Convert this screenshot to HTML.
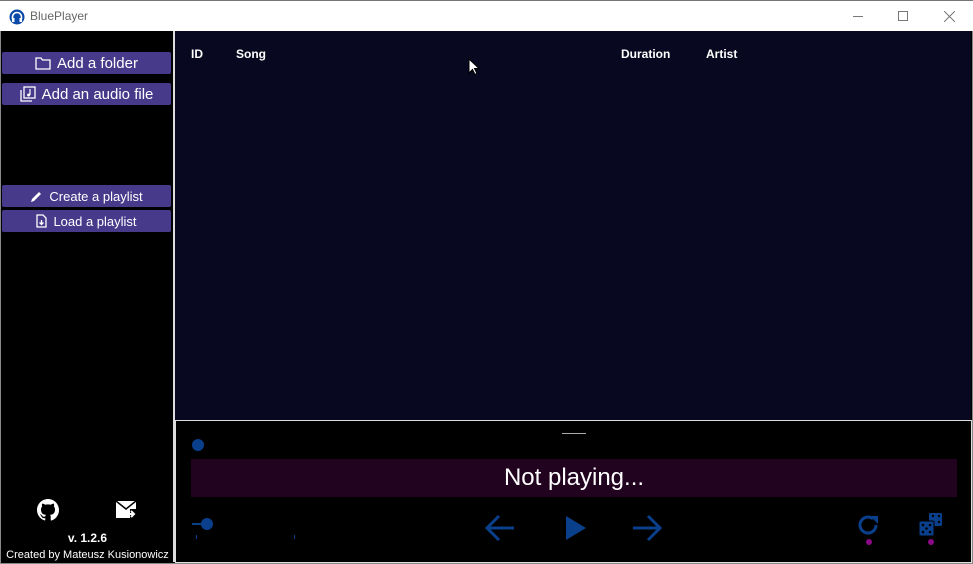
<!DOCTYPE html>
<html><head><meta charset="utf-8"><style>
*{margin:0;padding:0;box-sizing:border-box}
body{width:973px;height:564px;overflow:hidden;background:#fff;font-family:"Liberation Sans",sans-serif;position:relative}
.abs{position:absolute}
.title{left:0;top:0;width:973px;height:31px;background:#fff;border-top:1px solid #777}
.side{left:2px;top:31px;width:171px;height:531px;background:#000}
.main{left:175px;top:31px;width:796px;height:389px;background:#080820}
.btn{position:absolute;left:2px;width:169px;background:#483a8a;color:#fff;display:flex;align-items:center;justify-content:center;gap:6px;border-radius:2px}
.hd{color:#fff;font-weight:bold;font-size:12px;top:48px}
.bot{left:175px;top:420px;width:797px;height:143px;background:#000;border:1px solid #ddd}
</style></head><body>
<div class="abs" style="left:0;top:0;width:973px;height:564px;border:1px solid #888;background:#000"></div>
<div class="abs title">
<svg class="abs" style="left:9px;top:8px" width="16" height="16" viewBox="0 0 16 16"><circle cx="8" cy="8" r="7.5" fill="#0b4aa8"/><path d="M3.5 10V8a4.5 4.5 0 0 1 9 0v2" stroke="#fff" stroke-width="1.6" fill="none"/><rect x="3" y="9" width="2.5" height="4" fill="#fff"/><rect x="10.5" y="9" width="2.5" height="4" fill="#fff"/></svg>
<div class="abs" style="left:30px;top:8px;font-size:12px;color:#666">BluePlayer</div>
<div class="abs" style="left:853px;top:15px;width:10px;height:1px;background:#777"></div>
<div class="abs" style="left:898px;top:10px;width:10px;height:10px;border:1px solid #777"></div>
<svg class="abs" style="left:944px;top:10px" width="11" height="11"><path d="M0 0L11 11M11 0L0 11" stroke="#777" stroke-width="1"/></svg>
</div>
<div class="abs side"></div>
<div class="abs" style="left:173px;top:31px;width:2px;height:531px;background:#ddd"></div>
<div class="btn" style="top:52px;height:22px;font-size:15px"><svg width="16" height="13" viewBox="0 0 16 13"><path d="M1 1h5l1.5 2H15v9H1z" fill="none" stroke="#fff" stroke-width="1.3"/></svg>Add a folder</div>
<div class="btn" style="top:83px;height:22px;font-size:15px"><svg width="16" height="16" viewBox="0 0 16 16"><rect x="4" y="1" width="11" height="11" fill="none" stroke="#fff" stroke-width="1.3"/><path d="M1 4v11h11" fill="none" stroke="#fff" stroke-width="1.3"/><path d="M10 3v6" stroke="#fff" stroke-width="1.2"/><circle cx="8.6" cy="9" r="1.5" fill="#fff"/></svg>Add an audio file</div>
<div class="btn" style="top:185px;height:22px;font-size:13px"><svg width="13" height="13" viewBox="0 0 13 13"><path d="M1 12l1-3 7-7 2 2-7 7z" fill="#fff"/></svg>Create a playlist</div>
<div class="btn" style="top:210px;height:22px;font-size:13px"><svg width="11" height="14" viewBox="0 0 11 14"><path d="M1 1h6l3 3v9H1z" fill="none" stroke="#fff" stroke-width="1.3"/><path d="M5.5 6v4M3.5 8.5l2 2 2-2" stroke="#fff" stroke-width="1.3" fill="none"/></svg>Load a playlist</div>
<svg class="abs" style="left:37px;top:499px" width="22" height="22" viewBox="0 0 16 16"><path fill="#fff" d="M8 0C3.58 0 0 3.58 0 8c0 3.54 2.29 6.53 5.47 7.59.4.07.55-.17.55-.38v-1.33c-2.23.48-2.7-1.07-2.7-1.07-.36-.92-.89-1.17-.89-1.17-.73-.5.05-.49.05-.49.8.06 1.23.83 1.23.83.71 1.22 1.87.87 2.33.66.07-.52.28-.87.5-1.07-1.78-.2-3.64-.89-3.64-3.95 0-.87.31-1.59.82-2.15-.08-.2-.36-1.02.08-2.12 0 0 .67-.21 2.2.82a7.6 7.6 0 0 1 4 0c1.53-1.04 2.2-.82 2.2-.82.44 1.1.16 1.92.08 2.12.51.56.82 1.27.82 2.15 0 3.07-1.87 3.75-3.65 3.95.29.25.54.73.54 1.48v2.2c0 .21.15.46.55.38A8 8 0 0 0 16 8c0-4.42-3.58-8-8-8z"/></svg>
<svg class="abs" style="left:116px;top:500px" width="22" height="20" viewBox="0 0 22 20"><path d="M0 1h20v8h-6v9H0z" fill="#fff"/><path d="M0 1l10 8 10-8" stroke="#000" stroke-width="1.5" fill="none"/><path d="M12 14h6M15 11l3 3-3 3" stroke="#fff" stroke-width="2" fill="none"/></svg>
<div class="abs" style="left:2px;width:171px;top:531px;text-align:center;color:#fff;font-weight:bold;font-size:12px">v. 1.2.6</div>
<div class="abs" style="left:2px;width:171px;top:549px;text-align:center;color:#fff;font-size:11px">Created by Mateusz Kusionowicz</div>
<div class="abs main">
<div class="abs hd" style="left:16px;top:16px">ID</div>
<div class="abs hd" style="left:61px;top:16px">Song</div>
<div class="abs hd" style="left:446px;top:16px">Duration</div>
<div class="abs hd" style="left:531px;top:16px">Artist</div>
<svg class="abs" style="left:293px;top:27px" width="12" height="18" viewBox="0 0 12 18"><path d="M1 1v14l3.5-3.5 2.5 5 2-1-2.5-5H11z" fill="#fff" stroke="#000" stroke-width="1"/></svg>
</div>
<div class="abs bot">
<div class="abs" style="left:386px;top:12px;width:24px;height:1px;background:#aaa"></div>
<div class="abs" style="left:16px;top:18px;width:12px;height:12px;border-radius:50%;background:#0a3f8c"></div>
<div class="abs" style="left:15px;top:38px;width:766px;height:38px;background:#210320;color:#fff;font-size:24px;text-align:center;line-height:38px">Not playing...</div>
<div class="abs" style="left:16px;top:102px;width:12px;height:2px;background:#0a3f8c"></div>
<div class="abs" style="left:25px;top:97px;width:12px;height:12px;border-radius:50%;background:#0a3f8c"></div>
<div class="abs" style="left:20px;top:114px;width:1px;height:4px;background:#0a3f8c"></div>
<div class="abs" style="left:118px;top:114px;width:1px;height:4px;background:#0a3f8c"></div>
<svg class="abs" style="left:309px;top:93px" width="30" height="28" viewBox="0 0 30 28"><path d="M29 14H3M14 2L2 14l12 12" stroke="#0a3f8c" stroke-width="3" fill="none"/></svg>
<svg class="abs" style="left:390px;top:95px" width="20" height="24"><path d="M0 0l20 12L0 24z" fill="#0a3f8c"/></svg>
<svg class="abs" style="left:456px;top:93px" width="30" height="28" viewBox="0 0 30 28"><path d="M1 14h26M16 2l12 12-12 12" stroke="#0a3f8c" stroke-width="3" fill="none"/></svg>
<svg class="abs" style="left:682px;top:93px" width="22" height="22" viewBox="0 0 22 22"><path d="M18 11a8 8 0 1 1-3-6.2" stroke="#0a3f8c" stroke-width="3" fill="none"/><path d="M12 2h8v8z" fill="#0a3f8c"/></svg>
<div class="abs" style="left:690px;top:118px;width:6px;height:6px;border-radius:50%;background:#8a0a8a"></div>
<svg class="abs" style="left:743px;top:92px" width="24" height="24" viewBox="0 0 24 24"><rect x="10" y="0" width="13" height="13" rx="1.5" fill="#0a3f8c"/><rect x="0" y="8" width="15" height="15" rx="1.5" fill="#0a3f8c" stroke="#000" stroke-width="1"/><g fill="#000"><circle cx="4" cy="12" r="1.3"/><circle cx="11" cy="12" r="1.3"/><circle cx="7.5" cy="15.5" r="1.3"/><circle cx="4" cy="19" r="1.3"/><circle cx="11" cy="19" r="1.3"/><circle cx="14" cy="3" r="1.2"/><circle cx="20" cy="3" r="1.2"/><circle cx="20" cy="9" r="1.2"/></g></svg>
<div class="abs" style="left:752px;top:118px;width:6px;height:6px;border-radius:50%;background:#8a0a8a"></div>
</div>
</body></html>
